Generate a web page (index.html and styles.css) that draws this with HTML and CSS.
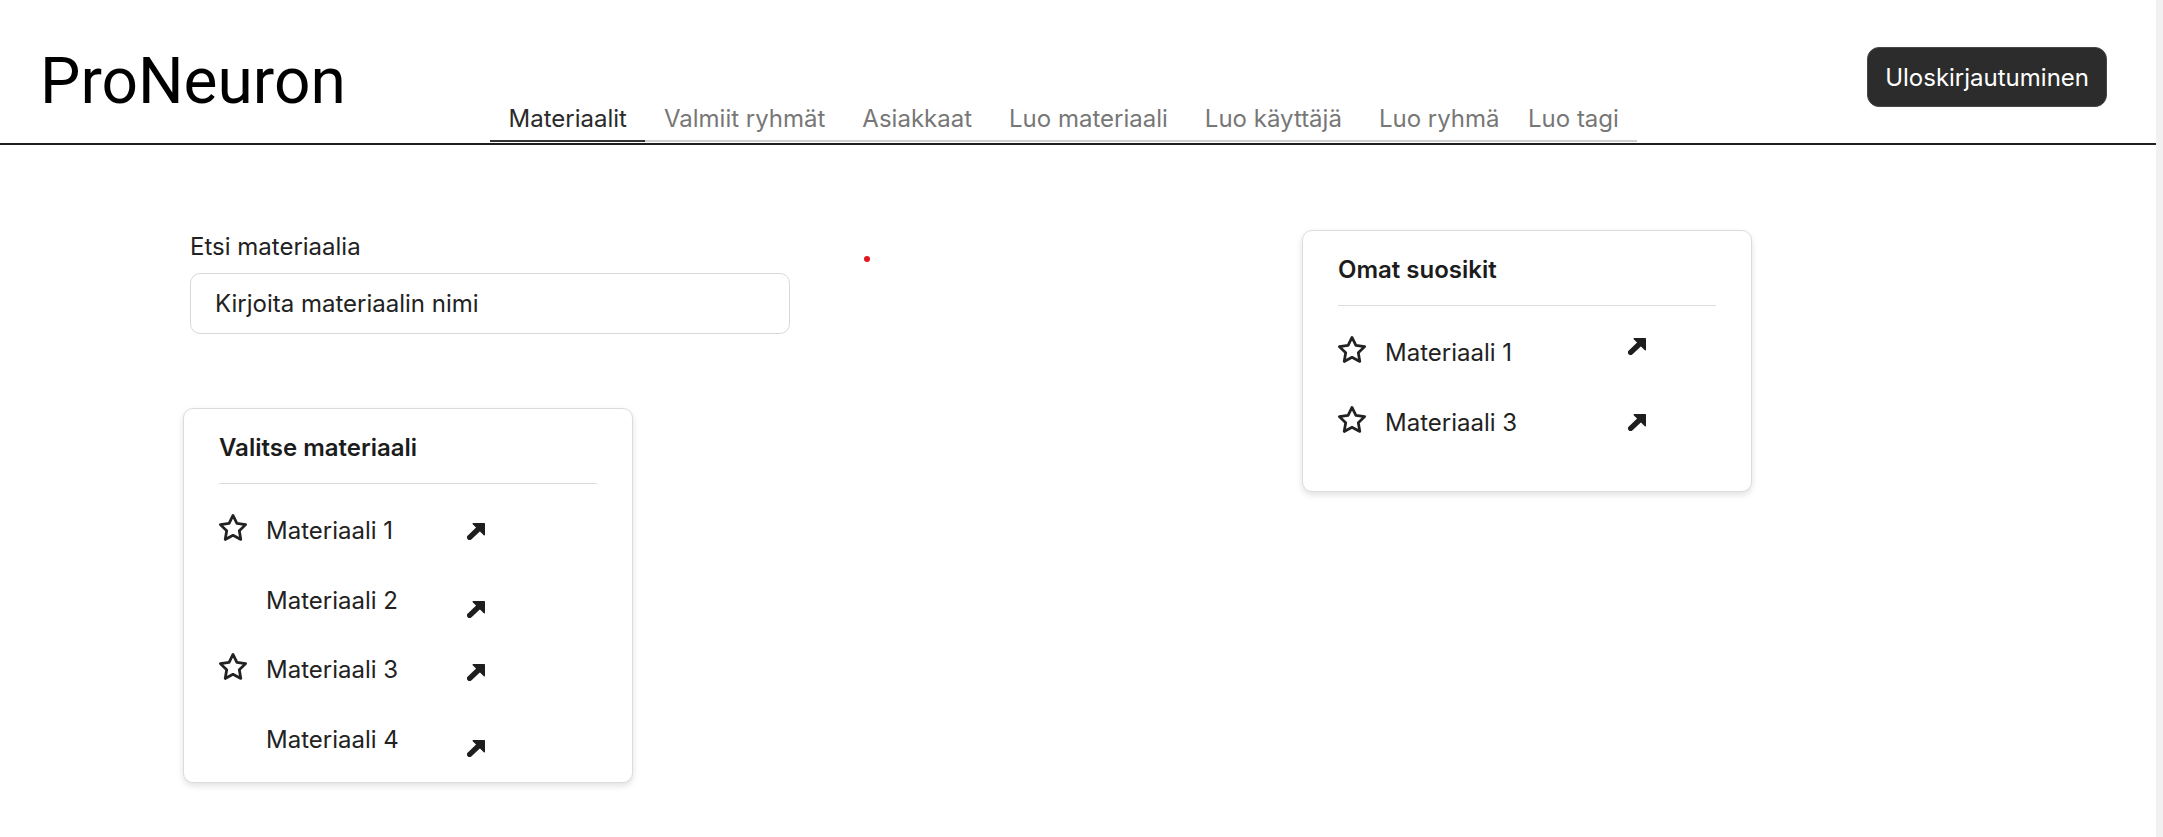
FILE: index.html
```html
<!DOCTYPE html>
<html lang="fi">
<head>
<meta charset="utf-8">
<title>ProNeuron</title>
<link rel="stylesheet" href="styles.css">
</head>
<body>
<header class="topbar">
  <div class="brand">ProNeuron</div>
  <nav class="tabs">
    <a class="tab tab--active">Materiaalit</a>
    <a class="tab">Valmiit ryhmät</a>
    <a class="tab">Asiakkaat</a>
    <a class="tab">Luo materiaali</a>
    <a class="tab">Luo käyttäjä</a>
    <a class="tab">Luo ryhmä</a>
    <a class="tab tab--last">Luo tagi</a>
  </nav>
  <button class="logout" type="button">Uloskirjautuminen</button>
</header>

<main class="content">
  <div class="left-col">
    <div class="search">
      <label class="search-label" for="q">Etsi materiaalia</label>
      <input id="q" class="search-input" type="text" placeholder="Kirjoita materiaalin nimi">
    </div>

    <section class="card card--select">
      <h2 class="card-title">Valitse materiaali</h2>
      <div class="divider"></div>
      <ul class="list">
        <li class="item">
          <span class="slot"><svg class="star" viewBox="0.9 0.9 22.2 21.3" width="28" height="27"><path d="M12 2l3.09 6.26L22 9.27l-5 4.87 1.18 6.88L12 17.77l-6.18 3.25L7 14.14 2 9.27l6.91-1.01L12 2z"/></svg></span>
          <span class="name">Materiaali 1</span>
          <svg class="arrow" viewBox="0 0 18 17" width="18" height="17"><path class="head" d="M6.2 0.7H17.3V11.8Z"/><path class="tail" d="M12 5.5L2.7 14.4"/></svg>
        </li>
        <li class="item">
          <span class="slot"></span>
          <span class="name">Materiaali 2</span>
          <svg class="arrow arrow--low" viewBox="0 0 18 17" width="18" height="17"><path class="head" d="M6.2 0.7H17.3V11.8Z"/><path class="tail" d="M12 5.5L2.7 14.4"/></svg>
        </li>
        <li class="item">
          <span class="slot"><svg class="star" viewBox="0.9 0.9 22.2 21.3" width="28" height="27"><path d="M12 2l3.09 6.26L22 9.27l-5 4.87 1.18 6.88L12 17.77l-6.18 3.25L7 14.14 2 9.27l6.91-1.01L12 2z"/></svg></span>
          <span class="name">Materiaali 3</span>
          <svg class="arrow arrow--nudge" viewBox="0 0 18 17" width="18" height="17"><path class="head" d="M6.2 0.7H17.3V11.8Z"/><path class="tail" d="M12 5.5L2.7 14.4"/></svg>
        </li>
        <li class="item">
          <span class="slot"></span>
          <span class="name">Materiaali 4</span>
          <svg class="arrow arrow--low" viewBox="0 0 18 17" width="18" height="17"><path class="head" d="M6.2 0.7H17.3V11.8Z"/><path class="tail" d="M12 5.5L2.7 14.4"/></svg>
        </li>
      </ul>
    </section>
  </div>

  <span class="dot"></span>

  <section class="card card--fav">
    <h2 class="card-title">Omat suosikit</h2>
    <div class="divider"></div>
    <ul class="list">
      <li class="item">
        <span class="slot"><svg class="star" viewBox="0.9 0.9 22.2 21.3" width="28" height="27"><path d="M12 2l3.09 6.26L22 9.27l-5 4.87 1.18 6.88L12 17.77l-6.18 3.25L7 14.14 2 9.27l6.91-1.01L12 2z"/></svg></span>
        <span class="name">Materiaali 1</span>
        <svg class="arrow arrow--high" viewBox="0 0 18 17" width="18" height="17"><path class="head" d="M6.2 0.7H17.3V11.8Z"/><path class="tail" d="M12 5.5L2.7 14.4"/></svg>
      </li>
      <li class="item">
        <span class="slot"><svg class="star" viewBox="0.9 0.9 22.2 21.3" width="28" height="27"><path d="M12 2l3.09 6.26L22 9.27l-5 4.87 1.18 6.88L12 17.77l-6.18 3.25L7 14.14 2 9.27l6.91-1.01L12 2z"/></svg></span>
        <span class="name">Materiaali 3</span>
        <svg class="arrow" viewBox="0 0 18 17" width="18" height="17"><path class="head" d="M6.2 0.7H17.3V11.8Z"/><path class="tail" d="M12 5.5L2.7 14.4"/></svg>
      </li>
    </ul>
  </section>
</main>
</body>
</html>
```

FILE: styles.css
```css
html, body {
  height: 100%;
}

body {
  margin: 0;
  font-family: Inter, "Noto Sans", sans-serif;
  color: #222;
  background: #fff;
  border-right: 7px solid #f1f1f1;
  box-sizing: border-box;
}

/* ---------- header ---------- */
.topbar {
  display: flex;
  align-items: flex-start;
  height: 143px;
  padding: 0 49px 0 40px;
  border-bottom: 2px solid #1e1e1e;
}

.brand {
  flex: 0 0 450px;
  margin-top: 45px;
  font-family: Roboto, "Liberation Sans", sans-serif;
  font-size: 64px;
  line-height: 73px;
  color: #000;
}

.tabs {
  align-self: flex-end;
  display: flex;
  margin-bottom: 1px;
  border-bottom: 2px solid #cfcfcf;
}

.tab {
  display: block;
  padding: 0 18.5px 6px;
  margin-bottom: -2px;
  border-bottom: 2px solid transparent;
  font-size: 24px;
  line-height: 30px;
  color: #777;
  white-space: nowrap;
  cursor: pointer;
}

.tab--active {
  color: #2a2a2a;
  border-bottom-color: #333;
}

.tab--last {
  padding-left: 10px;
}

.logout {
  margin-left: auto;
  margin-top: 47px;
  height: 60px;
  padding: 0 17px;
  font-family: Inter, sans-serif;
  font-size: 24px;
  color: #fff;
  background: #2c2c2c;
  border: 1px solid #474747;
  border-radius: 12px;
  cursor: pointer;
}

/* ---------- content ---------- */
.content {
  display: flex;
  align-items: flex-start;
  padding: 84px 0 0 183px;
}

.left-col {
  width: 608px;
}

.search {
  margin-left: 7px;
}

.search-label {
  display: block;
  font-size: 24px;
  line-height: 36px;
  color: #222;
}

.search-input {
  display: block;
  box-sizing: border-box;
  width: 600px;
  height: 61px;
  margin-top: 8px;
  padding: 0 24px;
  font-family: Inter, sans-serif;
  font-size: 24px;
  color: #222;
  border: 1.5px solid #d8d8d8;
  border-radius: 10px;
  outline: none;
}

.search-input::placeholder {
  color: #222;
  opacity: 1;
}

.dot {
  display: block;
  width: 6px;
  height: 6px;
  margin: 27px 0 0 73px;
  border-radius: 50%;
  background: #e3161d;
}

/* ---------- cards ---------- */
.card {
  box-sizing: border-box;
  width: 450px;
  padding: 21px 35px 24px;
  border: 1px solid #dcdcdc;
  border-radius: 10px;
  background: #fff;
  box-shadow: 0 3px 6px rgba(0, 0, 0, 0.12);
}

.card--select {
  margin-top: 74px;
}

.card--fav {
  margin: 1px 0 0 432px;
  min-height: 262px;
}

.card-title {
  margin: 0;
  font-size: 24px;
  line-height: 36px;
  font-weight: 600;
  color: #1c1c1c;
}

.divider {
  height: 1px;
  margin-top: 17px;
  background: #dcdcdc;
}

.list {
  list-style: none;
  margin: 29px 0 0;
  padding: 0;
  display: flex;
  flex-direction: column;
  gap: 33.5px;
}

.item {
  display: flex;
  align-items: center;
  height: 36px;
  font-size: 24px;
  line-height: 36px;
  color: #222;
}

.slot {
  display: flex;
  flex: 0 0 28px;
  margin-right: 19px;
}

.star {
  display: block;
  margin-bottom: 7px;
  fill: none;
  stroke: #222;
  stroke-width: 2.2;
  stroke-linejoin: round;
}

.name {
  white-space: nowrap;
}

.card--select .name {
  width: 200.7px;
}

.card--fav .name {
  width: 243.3px;
}

.arrow {
  display: block;
  flex: none;
}

.arrow .head {
  fill: #1e1e1e;
  stroke: #1e1e1e;
  stroke-width: 1.4;
  stroke-linejoin: round;
}

.arrow .tail {
  fill: none;
  stroke: #1e1e1e;
  stroke-width: 5.4;
  stroke-linecap: round;
}

.arrow--low {
  margin-top: 17px;
}

.arrow--nudge {
  margin-top: 5px;
}

.arrow--high {
  margin-bottom: 13px;
}
```
